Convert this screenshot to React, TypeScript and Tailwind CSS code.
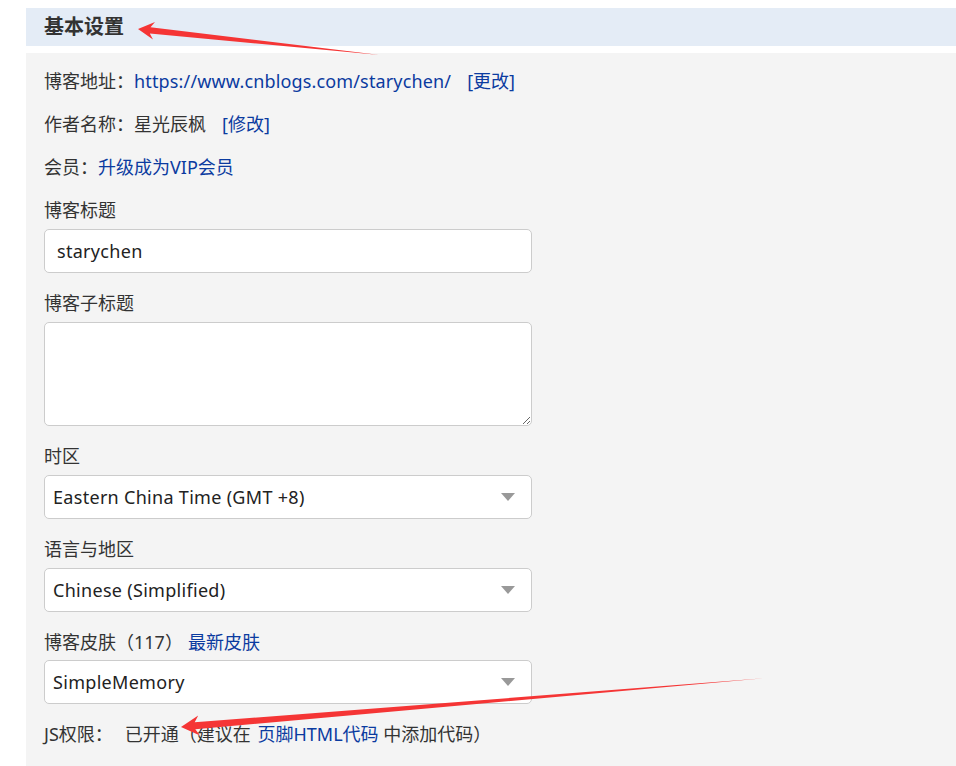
import React from 'react';

const font = { fontFamily: '"Noto Sans", "Noto Sans CJK SC", sans-serif' };

function Field({ label, children, top, gap = 'mb-[7px]' }: { label: React.ReactNode; children: React.ReactNode; top: string; gap?: string }) {
    return (
        <div className={top}>
            <div className={`h-6 leading-6 ${gap}`}>{label}</div>
            {children}
        </div>
    );
}

function FakeSelect({ value }: { value: string }) {
    return (
        <div className="w-[488px] h-[44px] bg-white border border-[#cccccc] rounded-[5px] flex items-center justify-between pl-[8px] pr-[16px] text-[#222] tracking-[0.3px]">
            <span>{value}</span>
            <span className="w-0 h-0 border-l-[7px] border-r-[7px] border-t-[8px] border-l-transparent border-r-transparent border-t-[#999999]"></span>
        </div>
    );
}

export default function App() {
    return (
        <div className="relative w-[956px] h-[766px] bg-white overflow-hidden text-[18px] text-[#333]" style={font}>
            {/* En-tête de section */}
            <div className="ml-[26px] mt-[8px] h-[38px] bg-[#e4ecf6] flex items-center pl-[18px]">
                <h2 className="text-[20px] font-bold text-[#333]">基本设置</h2>
            </div>

            {/* Panneau principal */}
            <div className="ml-[26px] mt-[7px] h-[713px] bg-[#f4f4f4] pl-[18px] pt-[7px]">
                <div className="h-[43px] leading-[43px]">
                    博客地址：<a className="text-[#0b3ba0] tracking-[0.15px]">https://www.cnblogs.com/starychen/</a>
                    <a className="text-[#0b3ba0] ml-[16px]">[更改]</a>
                </div>
                <div className="h-[43px] leading-[43px]">
                    作者名称：星光辰枫<a className="text-[#0b3ba0] ml-[16px]">[修改]</a>
                </div>
                <div className="h-[43px] leading-[43px]">
                    会员：<a className="text-[#0b3ba0]">升级成为VIP会员</a>
                </div>

                <Field label="博客标题" top="mt-[9px]">
                    <input
                        readOnly
                        value="starychen"
                        className="w-[488px] h-[44px] bg-white border border-[#cccccc] rounded-[5px] px-[12px] text-[#222] outline-none tracking-[0.3px]"
                        style={font}
                    />
                </Field>

                <Field label="博客子标题" top="mt-[18px]">
                    <textarea
                        readOnly
                        className="block w-[488px] h-[104px] bg-white border border-[#cccccc] rounded-[5px] outline-none"
                    ></textarea>
                </Field>

                <Field label="时区" top="mt-[18px]">
                    <FakeSelect value="Eastern China Time (GMT +8)" />
                </Field>

                <Field label="语言与地区" top="mt-[18px]">
                    <FakeSelect value="Chinese (Simplified)" />
                </Field>

                <Field
                    label={
                        <>
                            博客皮肤（117）<a className="text-[#0b3ba0] ml-[5px]">最新皮肤</a>
                        </>
                    }
                    top="mt-[18px]"
                    gap="mb-[6px]"
                >
                    <FakeSelect value="SimpleMemory" />
                </Field>

                <div className="mt-[18px] h-6 leading-6">
                    JS权限：<span className="ml-[12px]">已开通（建议在 </span>
                    <a className="text-[#0b3ba0] ml-[2px]">页脚HTML代码</a> 中添加代码）
                </div>
            </div>

            {/* Flèches d'annotation */}
            <svg className="absolute inset-0 pointer-events-none" width="956" height="766" viewBox="0 0 956 766">
                <polygon
                    fill="#f53535"
                    points="138,29 155,22 150.5,27.3 380,55 149.8,33.5 153,39.5"
                />
                <polygon
                    fill="#f53535"
                    points="181,727 198.2,715.5 194.7,722.3 767,678 195.3,729.3 200,735.5"
                />
            </svg>
        </div>
    );
}
